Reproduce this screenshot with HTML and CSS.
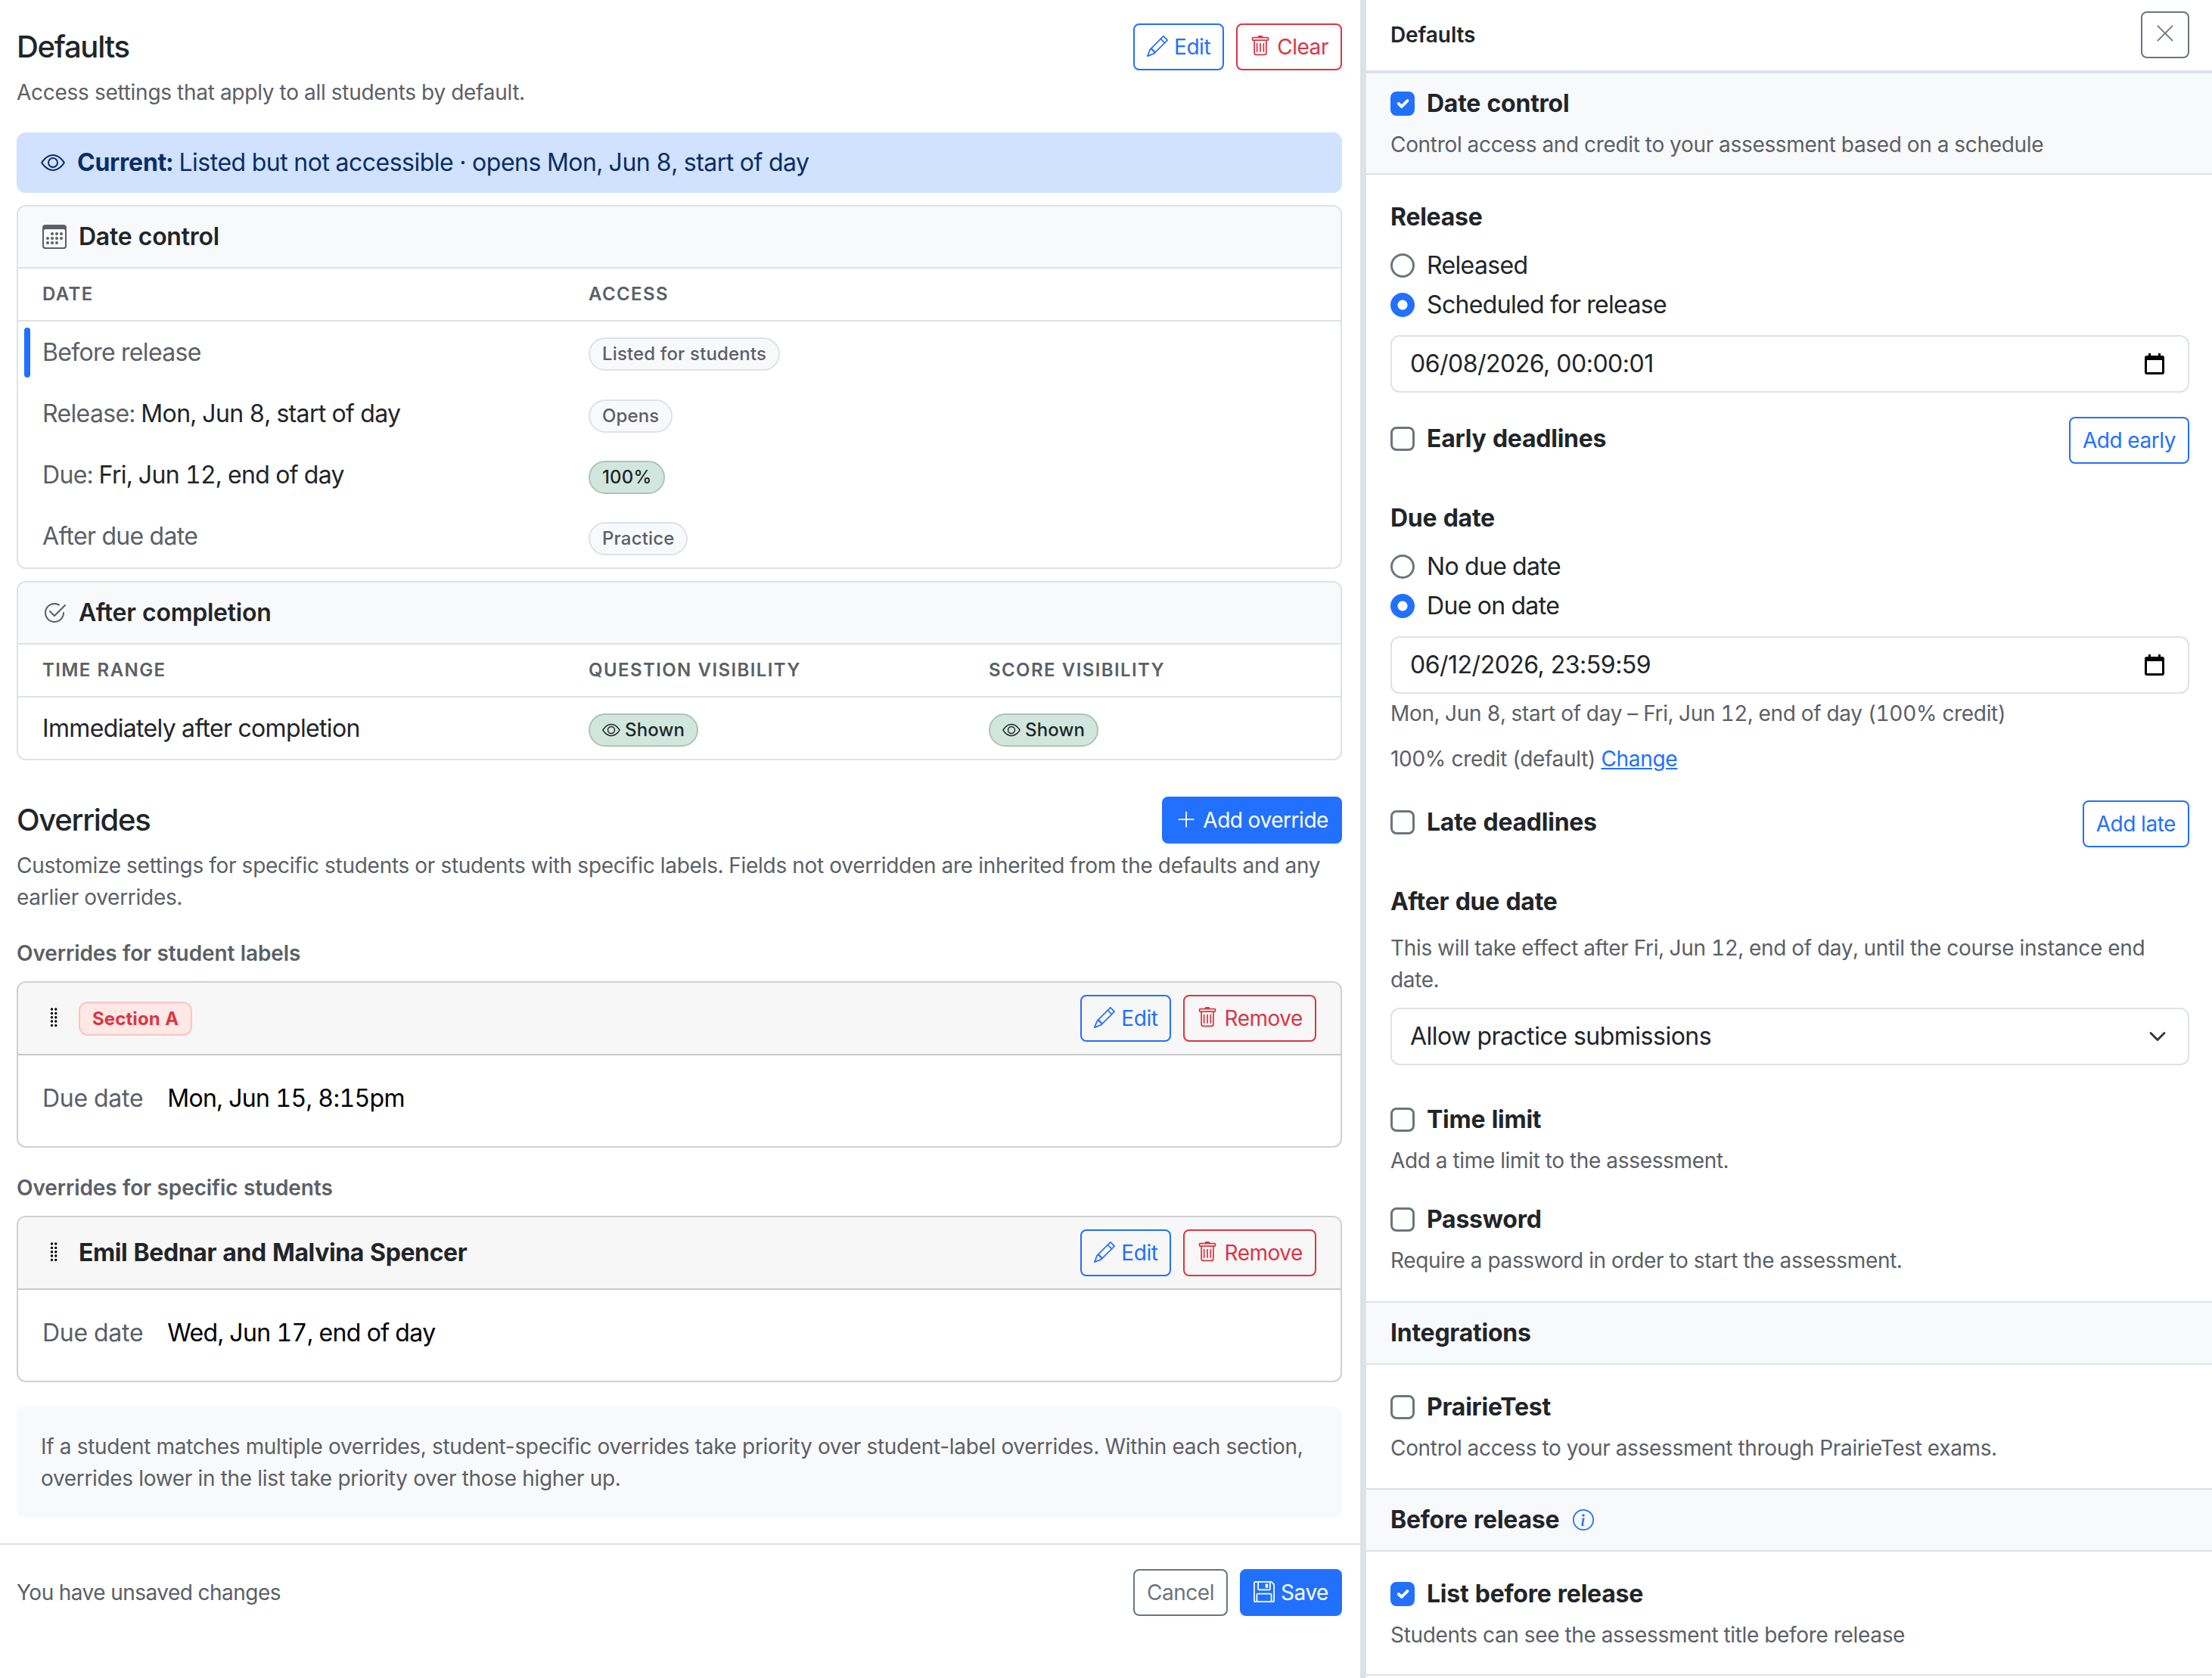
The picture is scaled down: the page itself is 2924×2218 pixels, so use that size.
FILE: index.html
```html
<!DOCTYPE html>
<html lang="en">
<head>
    <meta charset="UTF-8">
    <meta name="viewport" content="width=device-width, initial-scale=1.0">
    <title>Access control</title>
    <link rel="stylesheet" href="styles.css">
</head>
<body>
    <svg class="sprite" aria-hidden="true">
        <symbol id="i-eye" viewBox="0 0 16 16">
            <path d="M16 8s-3-5.5-8-5.5S0 8 0 8s3 5.5 8 5.5S16 8 16 8M1.173 8a13 13 0 0 1 1.66-2.043C4.12 4.668 5.88 3.5 8 3.5s3.879 1.168 5.168 2.457A13 13 0 0 1 14.828 8q-.086.13-.195.288c-.335.48-.83 1.12-1.465 1.755C11.879 11.332 10.119 12.5 8 12.5s-3.879-1.168-5.168-2.457A13 13 0 0 1 1.172 8z"/>
            <path d="M8 5.5a2.5 2.5 0 1 0 0 5 2.5 2.5 0 0 0 0-5M4.5 8a3.5 3.5 0 1 1 7 0 3.5 3.5 0 0 1-7 0"/>
        </symbol>
        <symbol id="i-calendar" viewBox="0 0 16 16">
            <path d="M14 0H2a2 2 0 0 0-2 2v12a2 2 0 0 0 2 2h12a2 2 0 0 0 2-2V2a2 2 0 0 0-2-2M1 3.857C1 3.384 1.448 3 2 3h12c.552 0 1 .384 1 .857v10.286c0 .473-.448.857-1 .857H2c-.552 0-1-.384-1-.857z"/>
            <path d="M6.5 7a1 1 0 1 0 0-2 1 1 0 0 0 0 2m3 0a1 1 0 1 0 0-2 1 1 0 0 0 0 2m3 0a1 1 0 1 0 0-2 1 1 0 0 0 0 2m-9 3a1 1 0 1 0 0-2 1 1 0 0 0 0 2m3 0a1 1 0 1 0 0-2 1 1 0 0 0 0 2m3 0a1 1 0 1 0 0-2 1 1 0 0 0 0 2m3 0a1 1 0 1 0 0-2 1 1 0 0 0 0 2m-9 3a1 1 0 1 0 0-2 1 1 0 0 0 0 2m3 0a1 1 0 1 0 0-2 1 1 0 0 0 0 2m3 0a1 1 0 1 0 0-2 1 1 0 0 0 0 2"/>
        </symbol>
        <symbol id="i-check-circle" viewBox="0 0 16 16">
            <path d="M2.5 8a5.5 5.5 0 0 1 8.25-4.764.5.5 0 0 0 .5-.866A6.5 6.5 0 1 0 14.5 8a.5.5 0 0 0-1 0 5.5 5.5 0 1 1-11 0"/>
            <path d="M15.354 3.354a.5.5 0 0 0-.708-.708L8 9.293 5.354 6.646a.5.5 0 1 0-.708.708l3 3a.5.5 0 0 0 .708 0z"/>
        </symbol>
        <symbol id="i-pencil" viewBox="0 0 16 16">
            <path d="M12.146.146a.5.5 0 0 1 .708 0l3 3a.5.5 0 0 1 0 .708l-10 10a.5.5 0 0 1-.168.11l-5 2a.5.5 0 0 1-.65-.65l2-5a.5.5 0 0 1 .11-.168zM11.207 2.5 13.5 4.793 14.793 3.5 12.5 1.207zm1.586 3L10.5 3.207 4 9.707V10h.5a.5.5 0 0 1 .5.5v.5h.5a.5.5 0 0 1 .5.5v.5h.293zm-9.761 5.175-.106.106-1.528 3.821 3.821-1.528.106-.106A.5.5 0 0 1 5 12.5V12h-.5a.5.5 0 0 1-.5-.5V11h-.5a.5.5 0 0 1-.468-.325"/>
        </symbol>
        <symbol id="i-trash" viewBox="0 0 16 16">
            <path d="M5.5 5.5A.5.5 0 0 1 6 6v6a.5.5 0 0 1-1 0V6a.5.5 0 0 1 .5-.5m2.5 0a.5.5 0 0 1 .5.5v6a.5.5 0 0 1-1 0V6a.5.5 0 0 1 .5-.5m3 .5a.5.5 0 0 0-1 0v6a.5.5 0 0 0 1 0z"/>
            <path d="M14.5 3a1 1 0 0 1-1 1H13v9a2 2 0 0 1-2 2H5a2 2 0 0 1-2-2V4h-.5a1 1 0 0 1-1-1V2a1 1 0 0 1 1-1H6a1 1 0 0 1 1-1h2a1 1 0 0 1 1 1h3.5a1 1 0 0 1 1 1zM4.118 4 4 4.059V13a1 1 0 0 0 1 1h6a1 1 0 0 0 1-1V4.059L11.882 4zM2.5 3h11V2h-11z"/>
        </symbol>
        <symbol id="i-plus" viewBox="0 0 16 16">
            <path d="M8 2a.5.5 0 0 1 .5.5v5h5a.5.5 0 0 1 0 1h-5v5a.5.5 0 0 1-1 0v-5h-5a.5.5 0 0 1 0-1h5v-5A.5.5 0 0 1 8 2"/>
        </symbol>
        <symbol id="i-x" viewBox="0 0 16 16">
            <path d="M2.146 2.854a.5.5 0 1 1 .708-.708L8 7.293l5.146-5.147a.5.5 0 0 1 .708.708L8.707 8l5.147 5.146a.5.5 0 0 1-.708.708L8 8.707l-5.146 5.147a.5.5 0 0 1-.708-.708L7.293 8z"/>
        </symbol>
        <symbol id="i-floppy" viewBox="0 0 16 16">
            <path d="M11 2H9v3h2z"/>
            <path d="M1.5 0h11.586a1.5 1.5 0 0 1 1.06.44l1.415 1.414A1.5 1.5 0 0 1 16 2.914V14.5a1.5 1.5 0 0 1-1.5 1.5h-13A1.5 1.5 0 0 1 0 14.5v-13A1.5 1.5 0 0 1 1.5 0M1 1.5v13a.5.5 0 0 0 .5.5H2v-4.5A1.5 1.5 0 0 1 3.5 9h9a1.5 1.5 0 0 1 1.5 1.5V15h.5a.5.5 0 0 0 .5-.5V2.914a.5.5 0 0 0-.146-.353l-1.415-1.415A.5.5 0 0 0 13.086 1H13v4.5A1.5 1.5 0 0 1 11.5 7h-7A1.5 1.5 0 0 1 3 5.5V1H1.5a.5.5 0 0 0-.5.5m3 4a.5.5 0 0 0 .5.5h7a.5.5 0 0 0 .5-.5V1H4zM3 15h10v-4.5a.5.5 0 0 0-.5-.5h-9a.5.5 0 0 0-.5.5z"/>
        </symbol>
        <symbol id="i-info" viewBox="0 0 16 16">
            <path d="M8 15A7 7 0 1 1 8 1a7 7 0 0 1 0 14m0 1A8 8 0 1 0 8 0a8 8 0 0 0 0 16"/>
            <path d="m8.93 6.588-2.29.287-.082.38.45.083c.294.07.352.176.288.469l-.738 3.468c-.194.897.105 1.319.808 1.319.545 0 1.178-.252 1.465-.598l.088-.416c-.2.176-.492.246-.686.246-.275 0-.375-.193-.304-.533zM9 4.5a1 1 0 1 1-2 0 1 1 0 0 1 2 0"/>
        </symbol>
        <symbol id="i-date" viewBox="0 0 26 28">
            <path d="M5 0h3v3h10V0h3v3h2a3 3 0 0 1 3 3v19a3 3 0 0 1-3 3H3a3 3 0 0 1-3-3V6a3 3 0 0 1 3-3h2zM3 9v16h20V9z" fill-rule="evenodd"/>
        </symbol>
        <symbol id="i-chevron" viewBox="0 0 16 16">
            <path fill="none" stroke="#343a40" stroke-linecap="round" stroke-linejoin="round" stroke-width="2" d="m2 5 6 6 6-6"/>
        </symbol>
        <symbol id="i-grip" viewBox="0 0 10 26">
            <path stroke="#000" stroke-width="3.4" stroke-linecap="round" d="M2.5 2h0M7.8 2h0M2.5 7.4h0M7.8 7.4h0M2.5 12.7h0M7.8 12.7h0M2.5 18h0M7.8 18h0M2.5 23.4h0M7.8 23.4h0"/>
        </symbol>
    </svg>

    <div class="layout">
        <main class="main-pane">
            <div class="content">
                <div class="section-title">
                    <h2>Defaults</h2>
                    <div class="actions">
                        <button class="btn btn-outline-primary"><svg class="icon"><use href="#i-pencil"/></svg>Edit</button>
                        <button class="btn btn-outline-danger"><svg class="icon"><use href="#i-trash"/></svg>Clear</button>
                    </div>
                </div>
                <p class="lead-text">Access settings that apply to all students by default.</p>

                <div class="alert">
                    <svg class="icon"><use href="#i-eye"/></svg>
                    <div><strong>Current:</strong> Listed but not accessible · opens Mon, Jun 8, start of day</div>
                </div>

                <section class="summary">
                    <div class="summary-header"><svg class="icon"><use href="#i-calendar"/></svg>Date control</div>
                    <div class="row row-head"><div>Date</div><div>Access</div></div>
                    <div class="row current"><div class="muted">Before release</div><div><span class="pill">Listed for students</span></div></div>
                    <div class="row"><div><span class="muted">Release:</span> Mon, Jun 8, start of day</div><div><span class="pill">Opens</span></div></div>
                    <div class="row"><div><span class="muted">Due:</span> Fri, Jun 12, end of day</div><div><span class="pill pill-success">100%</span></div></div>
                    <div class="row"><div class="muted">After due date</div><div><span class="pill">Practice</span></div></div>
                </section>

                <section class="summary">
                    <div class="summary-header"><svg class="icon"><use href="#i-check-circle"/></svg>After completion</div>
                    <div class="row row-head"><div>Time range</div><div>Question visibility</div><div>Score visibility</div></div>
                    <div class="row">
                        <div>Immediately after completion</div>
                        <div><span class="pill pill-success"><svg class="icon"><use href="#i-eye"/></svg>Shown</span></div>
                        <div><span class="pill pill-success"><svg class="icon"><use href="#i-eye"/></svg>Shown</span></div>
                    </div>
                </section>

                <div class="section-title overrides-title">
                    <h2>Overrides</h2>
                    <button class="btn btn-primary"><svg class="icon"><use href="#i-plus"/></svg>Add override</button>
                </div>
                <p class="lead-text">Customize settings for specific students or students with specific labels. Fields not overridden are inherited from the defaults and any earlier overrides.</p>

                <h3 class="group-title">Overrides for student labels</h3>
                <section class="card">
                    <div class="card-header">
                        <svg class="grip"><use href="#i-grip"/></svg>
                        <div class="card-name"><span class="label-badge">Section A</span></div>
                        <div class="actions">
                            <button class="btn btn-outline-primary"><svg class="icon"><use href="#i-pencil"/></svg>Edit</button>
                            <button class="btn btn-outline-danger"><svg class="icon"><use href="#i-trash"/></svg>Remove</button>
                        </div>
                    </div>
                    <div class="card-body"><span class="key">Due date</span><span>Mon, Jun 15, 8:15pm</span></div>
                </section>

                <h3 class="group-title">Overrides for specific students</h3>
                <section class="card">
                    <div class="card-header">
                        <svg class="grip"><use href="#i-grip"/></svg>
                        <div class="card-name">Emil Bednar and Malvina Spencer</div>
                        <div class="actions">
                            <button class="btn btn-outline-primary"><svg class="icon"><use href="#i-pencil"/></svg>Edit</button>
                            <button class="btn btn-outline-danger"><svg class="icon"><use href="#i-trash"/></svg>Remove</button>
                        </div>
                    </div>
                    <div class="card-body"><span class="key">Due date</span><span>Wed, Jun 17, end of day</span></div>
                </section>

                <div class="note">If a student matches multiple overrides, student-specific overrides take priority over student-label overrides. Within each section, overrides lower in the list take priority over those higher up.</div>
            </div>

            <footer class="footer">
                <span class="status">You have unsaved changes</span>
                <div class="actions">
                    <button class="btn btn-outline-secondary">Cancel</button>
                    <button class="btn btn-primary"><svg class="icon"><use href="#i-floppy"/></svg>Save</button>
                </div>
            </footer>
        </main>

        <aside class="side-pane">
            <header class="side-header">
                <span class="side-title">Defaults</span>
                <button class="btn btn-outline-secondary btn-close" aria-label="Close"><svg class="icon"><use href="#i-x"/></svg></button>
            </header>

            <div class="panel-header panel-header-first">
                <label class="check"><input type="checkbox" checked><b>Date control</b></label>
                <p class="help">Control access and credit to your assessment based on a schedule</p>
            </div>
            <div class="panel-body">
                <h4>Release</h4>
                <label class="check"><input type="radio" name="release">Released</label>
                <label class="check"><input type="radio" name="release" checked>Scheduled for release</label>
                <div class="control"><span>06/08/2026, 00:00:01</span><svg class="date-icon"><use href="#i-date"/></svg></div>

                <div class="deadline-row">
                    <label class="check"><input type="checkbox"><b>Early deadlines</b></label>
                    <button class="btn btn-outline-primary">Add early</button>
                </div>

                <h4>Due date</h4>
                <label class="check"><input type="radio" name="due">No due date</label>
                <label class="check"><input type="radio" name="due" checked>Due on date</label>
                <div class="control"><span>06/12/2026, 23:59:59</span><svg class="date-icon"><use href="#i-date"/></svg></div>
                <p class="help">Mon, Jun 8, start of day – Fri, Jun 12, end of day (100% credit)</p>
                <p class="help credit">100% credit (default) <a href="#">Change</a></p>

                <div class="deadline-row">
                    <label class="check"><input type="checkbox"><b>Late deadlines</b></label>
                    <button class="btn btn-outline-primary">Add late</button>
                </div>

                <h4>After due date</h4>
                <p class="help">This will take effect after Fri, Jun 12, end of day, until the course instance end date.</p>
                <div class="control"><span>Allow practice submissions</span><svg class="chevron"><use href="#i-chevron"/></svg></div>

                <div class="option option-first">
                    <label class="check"><input type="checkbox"><b>Time limit</b></label>
                    <p class="help">Add a time limit to the assessment.</p>
                </div>
                <div class="option">
                    <label class="check"><input type="checkbox"><b>Password</b></label>
                    <p class="help">Require a password in order to start the assessment.</p>
                </div>
            </div>

            <div class="panel-header"><b>Integrations</b></div>
            <div class="panel-body">
                <label class="check"><input type="checkbox"><b>PrairieTest</b></label>
                <p class="help">Control access to your assessment through PrairieTest exams.</p>
            </div>

            <div class="panel-header"><b>Before release</b><svg class="icon info"><use href="#i-info"/></svg></div>
            <div class="panel-body panel-last">
                <label class="check"><input type="checkbox" checked><b>List before release</b></label>
                <p class="help">Students can see the assessment title before release</p>
            </div>
        </aside>
    </div>
</body>
</html>
```

FILE: styles.css
```css
* {
    margin: 0;
    padding: 0;
    box-sizing: border-box;
}

body {
    font-family: Inter, "Liberation Sans", sans-serif;
    font-size: 32px;
    line-height: 48px;
    letter-spacing: -0.65px;
    font-variant-numeric: tabular-nums;
    color: #212529;
    background: #fff;
    overflow: hidden;
}

b,
strong {
    font-weight: 700;
    letter-spacing: -0.25px;
}

.sprite {
    display: none;
}

.icon {
    width: 28px;
    height: 28px;
    fill: currentColor;
    flex-shrink: 0;
}

.layout {
    display: grid;
    grid-template-columns: 1798px 1fr;
    height: 2218px;
}

.muted {
    color: #5b6066;
}

/* Buttons */
.btn {
    display: inline-flex;
    align-items: center;
    gap: 8px;
    height: 62px;
    padding: 0 16px;
    border: 2px solid transparent;
    border-radius: 8px;
    background: transparent;
    font: inherit;
    font-size: 28px;
    font-weight: 400;
    letter-spacing: -0.45px;
    white-space: nowrap;
}

.btn .icon {
    margin-bottom: 3px;
}

.btn-primary {
    background: #2270fe;
    border-color: #2270fe;
    color: #fff;
}

.btn-outline-primary {
    border-color: #2270fe;
    color: #2270fe;
}

.btn-outline-danger {
    border-color: #dc3545;
    color: #dc3545;
}

.btn-outline-secondary {
    border-color: #6c757d;
    color: #6c757d;
}

.actions {
    display: flex;
    gap: 16px;
}

/* Left pane */
.content {
    height: 2040px;
    padding: 31px 24px 0 22px;
}

.section-title {
    display: flex;
    align-items: center;
    justify-content: space-between;
    height: 62px;
}

h2 {
    font-size: 40px;
    font-weight: 500;
    letter-spacing: -1.3px;
}

.lead-text {
    font-size: 28px;
    line-height: 42px;
    letter-spacing: -0.26px;
    color: #5b6066;
    margin-top: 8px;
}

.alert {
    display: flex;
    align-items: center;
    gap: 16px;
    height: 80px;
    margin-top: 32px;
    padding: 0 32px;
    border-radius: 12px;
    background: #d0e2ff;
    color: #0a2d66;
    letter-spacing: -0.5px;
}

.alert .icon {
    width: 32px;
    height: 32px;
}

.summary {
    margin-top: 16px;
    border: 2px solid #dee2e6;
    border-radius: 12px;
    overflow: hidden;
}

.summary-header {
    display: flex;
    align-items: center;
    gap: 16px;
    height: 82px;
    padding: 0 32px;
    border-bottom: 2px solid #dee2e6;
    background: #f8f9fa;
    font-weight: 600;
    letter-spacing: -0.25px;
}

.summary-header .icon {
    width: 32px;
    height: 32px;
    color: #5b6066;
}

.row {
    display: grid;
    grid-template-columns: 722px 529px 1fr;
    align-items: center;
    height: 81.25px;
    padding-left: 32px;
}

.row-head {
    height: 70px;
    border-bottom: 2px solid #dee2e6;
    font-size: 24px;
    font-weight: 600;
    letter-spacing: 1.4px;
    text-transform: uppercase;
    color: #5b6066;
}

.current {
    padding-left: 8px;
    grid-template-columns: 746px 1fr;
}

.current > .muted {
    display: flex;
    align-items: center;
    gap: 16px;
}

.current > .muted::before {
    content: "";
    width: 8px;
    height: 66px;
    border-radius: 4px;
    background: #2270fe;
}

.pill {
    display: inline-flex;
    align-items: center;
    gap: 6px;
    height: 44px;
    margin-top: 2px;
    padding: 0 16px;
    border: 2px solid #dee2e6;
    border-radius: 22px;
    background: #f8f9fa;
    color: #5b6066;
    font-size: 24px;
    font-weight: 500;
    font-variant-numeric: normal;
    letter-spacing: 0.15px;
    vertical-align: middle;
}

.pill .icon {
    width: 24px;
    height: 24px;
}

.pill-success {
    border-color: #b1c0ba;
    background: #d1e7dd;
    color: #212529;
}

.overrides-title {
    margin-top: 48px;
}

.group-title {
    margin: 32px 0 16px;
    font-size: 28px;
    line-height: 42px;
    font-weight: 600;
    letter-spacing: -0.1px;
    color: #5b6066;
}

.card {
    border: 2px solid #d0d0d1;
    border-radius: 12px;
    overflow: hidden;
}

.card-header {
    display: flex;
    align-items: center;
    height: 96px;
    padding: 0 32px;
    border-bottom: 2px solid #c8c9ca;
    background: #f7f7f7;
    font-weight: 700;
}

.grip {
    width: 10px;
    height: 26px;
    margin: 0 28px 2px 10px;
}

.card-name {
    display: flex;
    flex: 1;
    letter-spacing: -0.4px;
}

.label-badge {
    height: 45px;
    padding: 0 16px;
    border: 2px solid #ffc4bd;
    border-radius: 12px;
    background: #ffe8e5;
    color: #dc3545;
    font-size: 24px;
    line-height: 42px;
    letter-spacing: 0.1px;
}

.card-body {
    display: flex;
    gap: 32px;
    height: 120px;
    padding: 33px 32px 0;
    color: #000;
}

.key {
    color: #5b6066;
    letter-spacing: -0.3px;
}

.note {
    margin-top: 32px;
    padding: 32px;
    border-radius: 12px;
    background: #f8f9fa;
    color: #5b6066;
    font-size: 28px;
    line-height: 42px;
    font-variant-numeric: normal;
    letter-spacing: -0.33px;
}

.footer {
    display: flex;
    justify-content: space-between;
    align-items: center;
    padding: 32px 24px 0 22px;
    border-top: 2px solid #dee2e6;
}

.status {
    font-size: 28px;
    letter-spacing: -0.5px;
    color: #5b6066;
}

/* Right pane */
.side-pane {
    border-left: 8px solid #dee2e6;
}

.side-header {
    display: flex;
    align-items: center;
    justify-content: space-between;
    height: 95px;
    padding: 0 30px 2px 32px;
    border-bottom: 2px solid #dee2e6;
}

.side-title {
    font-size: 28px;
    font-weight: 600;
    letter-spacing: -0.1px;
}

.btn-close {
    justify-content: center;
    width: 64px;
    padding: 0;
}

.panel-header {
    display: flex;
    align-items: center;
    height: 84px;
    padding: 0 32px;
    border-top: 2px solid #dee2e6;
    border-bottom: 2px solid #dee2e6;
    background: #f8f9fa;
}

.panel-header-first {
    display: block;
    height: 136px;
    padding-top: 16px;
}

.info {
    margin-left: 18px;
    color: #2270fe;
}

.panel-body {
    padding: 32px 30px 32.5px 32px;
}

.panel-last {
    border-bottom: 2px solid #dee2e6;
    padding-bottom: 31px;
}

h4 {
    margin-bottom: 16px;
    font-size: 32px;
    font-weight: 700;
    letter-spacing: -0.25px;
}

.check {
    display: flex;
    align-items: center;
    gap: 16px;
    margin-bottom: 4px;
}

.check input {
    appearance: none;
    width: 32px;
    height: 32px;
    border: 3px solid #6c757d;
    border-radius: 8px;
    background: center / contain no-repeat;
}

.check input[type="radio"] {
    border-radius: 50%;
}

.check input:checked {
    border-color: #2270fe;
    background-color: #2270fe;
}

.check input[type="checkbox"]:checked {
    background-image: url("data:image/svg+xml,%3csvg xmlns='http://www.w3.org/2000/svg' viewBox='0 0 20 20'%3e%3cpath fill='none' stroke='%23fff' stroke-linecap='round' stroke-linejoin='round' stroke-width='3' d='m6 10 3 3 6-6'/%3e%3c/svg%3e");
}

.check input[type="radio"]:checked {
    background-image: radial-gradient(circle, #fff 6px, transparent 7px);
}

.help {
    margin-top: 5px;
    font-size: 28px;
    line-height: 42px;
    letter-spacing: -0.32px;
    color: #5b6066;
}

.check + .help {
    margin-top: 9px;
}

.credit {
    margin-top: 18px;
    padding-bottom: 2px;
    font-variant-numeric: normal;
}

.credit a {
    color: #2270fe;
}

.control {
    display: flex;
    align-items: center;
    justify-content: space-between;
    height: 76px;
    margin-top: 16px;
    padding: 0 31px 0 24px;
    border: 2px solid #dee2e6;
    border-radius: 12px;
    font-variant-numeric: normal;
    letter-spacing: -0.5px;
}

.date-icon {
    width: 26px;
    height: 28px;
}

.chevron {
    width: 24px;
    height: 24px;
    margin-right: -3px;
}

.deadline-row {
    display: flex;
    justify-content: space-between;
    align-items: center;
    margin: 32px 0 48px;
}

.option {
    margin-top: 33px;
}

.option-first {
    margin-top: 48px;
}
```
